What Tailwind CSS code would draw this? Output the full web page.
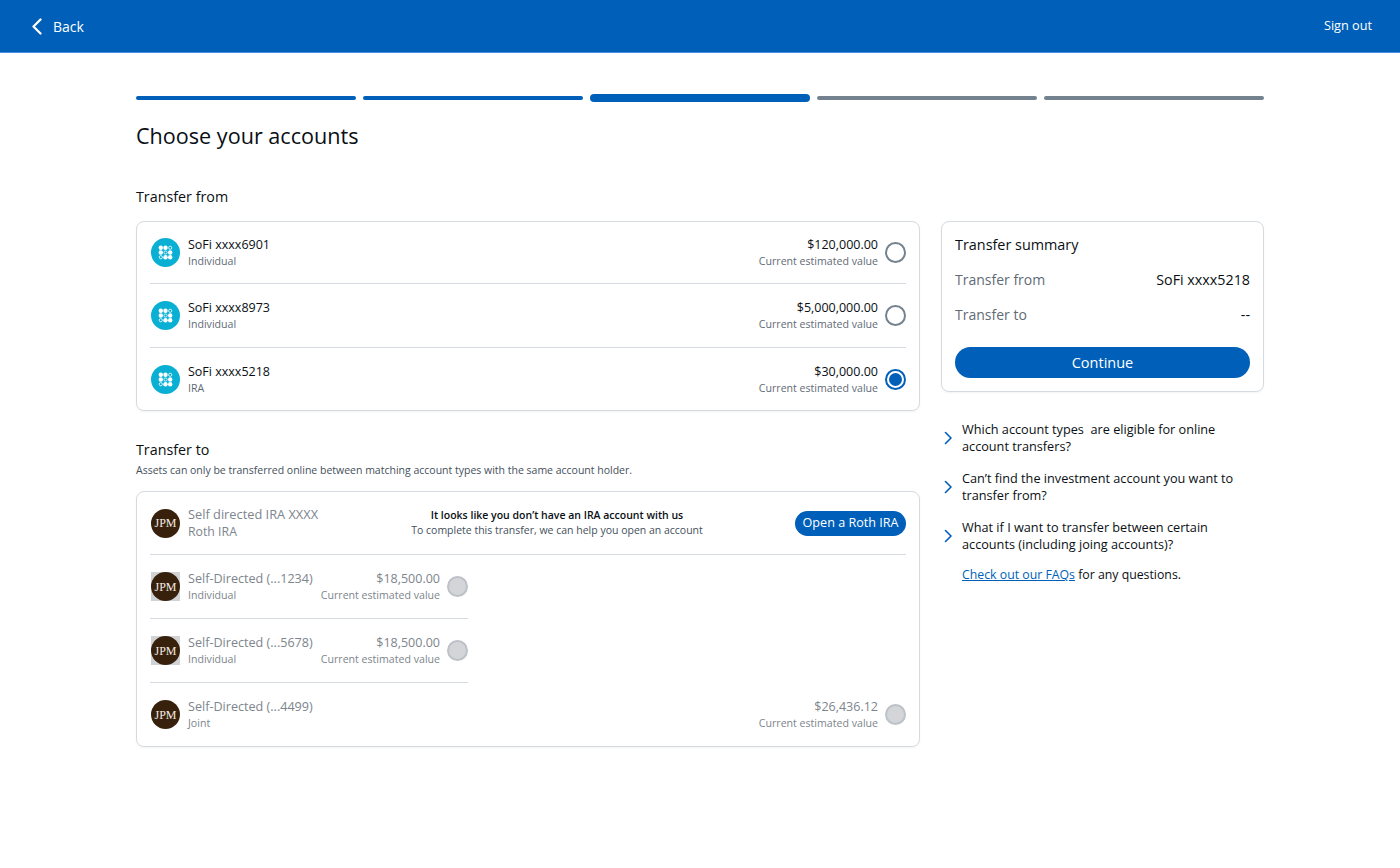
<!DOCTYPE html>
<html lang="en">
<head>
    <meta charset="UTF-8">
    <title>Choose your accounts</title>
    <script src="https://cdn.jsdelivr.net/npm/@tailwindcss/browser@4"></script>
</head>
<body class="bg-white min-h-screen font-['Open_Sans',sans-serif] text-[#0a0f14]">
    <!-- Header -->
    <div class="h-[53px] bg-[#005fb8] border-b border-[#4a8fe0] flex justify-between items-center pl-[32px] pr-[28px] text-white font-medium">
        <div class="flex items-center gap-[10px] text-[14px]">
            <svg class="w-[11px] h-[17px]" viewBox="0 0 11 17" fill="none" stroke="white" stroke-width="2.3" stroke-linecap="round" stroke-linejoin="round"><path d="M8.5 1.5 1.5 8.5l7 7" /></svg>
            <span>Back</span>
        </div>
        <span class="text-[12.7px]">Sign out</span>
    </div>

    <div class="w-[1128px] ml-[136px]">
        <!-- Steps -->
        <div class="flex items-center gap-[7px] mt-[41px] h-[8px]">
            <div class="flex-1 h-[4px] rounded-full bg-[#005fb8]"></div>
            <div class="flex-1 h-[4px] rounded-full bg-[#005fb8]"></div>
            <div class="flex-1 h-[8px] rounded-full bg-[#005fb8]"></div>
            <div class="flex-1 h-[4px] rounded-full bg-[#74828f]"></div>
            <div class="flex-1 h-[4px] rounded-full bg-[#74828f]"></div>
        </div>
        <h1 class="text-[21.6px] leading-[30px] font-medium mt-[19px]">Choose your accounts</h1>

        <div class="flex gap-[21px] mt-[34px]">
            <!-- Left column -->
            <div class="w-[784px]">
                <h2 class="text-[14.3px] leading-[24px] font-medium">Transfer from</h2>
                <div class="mt-[12px] border border-[#d5dae0] rounded-[8px] px-[13px] shadow-[0_1px_2px_rgba(0,0,0,0.05)]">
                    <div class="flex items-center h-[62px] border-b border-[#d5dae0]">
                        <svg class="w-[29px] h-[29px] ml-[1px] shrink-0" viewBox="0 0 29 29"><circle cx="14.5" cy="14.5" r="14.5" fill="#0ab0d4" /><g fill="white"><circle cx="9.8" cy="9.8" r="2.2" /><circle cx="14.5" cy="9.8" r="2.2" /><circle cx="19.2" cy="9.8" r="1.6" fill="none" stroke="white" stroke-width=".8" /><circle cx="9.8" cy="14.5" r="2.2" /><circle cx="14.5" cy="14.5" r="1.6" fill="none" stroke="white" stroke-width=".8" /><circle cx="19.2" cy="14.5" r="2.2" /><circle cx="9.8" cy="19.2" r="1.6" fill="none" stroke="white" stroke-width=".8" /><circle cx="14.5" cy="19.2" r="2.2" /><circle cx="19.2" cy="19.2" r="2.2" /></g></svg>
                        <div class="ml-[8px] whitespace-nowrap">
                            <div class="text-[12.5px] leading-[17px] font-medium">SoFi xxxx6901</div>
                            <div class="text-[10.6px] leading-[16px] text-[#5f6b76]">Individual</div>
                        </div>
                        <div class="ml-auto text-right whitespace-nowrap">
                            <div class="text-[12.5px] leading-[17px] font-medium">$120,000.00</div>
                            <div class="text-[10.6px] leading-[16px] text-[#5f6b76]">Current estimated value</div>
                        </div>
                        <div class="ml-[7px] w-[21px] h-[21px] rounded-full border-2 border-[#74828f]"></div>
                    </div>
                    <div class="flex items-center h-[64px] border-b border-[#d5dae0]">
                        <svg class="w-[29px] h-[29px] ml-[1px] shrink-0" viewBox="0 0 29 29"><circle cx="14.5" cy="14.5" r="14.5" fill="#0ab0d4" /><g fill="white"><circle cx="9.8" cy="9.8" r="2.2" /><circle cx="14.5" cy="9.8" r="2.2" /><circle cx="19.2" cy="9.8" r="1.6" fill="none" stroke="white" stroke-width=".8" /><circle cx="9.8" cy="14.5" r="2.2" /><circle cx="14.5" cy="14.5" r="1.6" fill="none" stroke="white" stroke-width=".8" /><circle cx="19.2" cy="14.5" r="2.2" /><circle cx="9.8" cy="19.2" r="1.6" fill="none" stroke="white" stroke-width=".8" /><circle cx="14.5" cy="19.2" r="2.2" /><circle cx="19.2" cy="19.2" r="2.2" /></g></svg>
                        <div class="ml-[8px] whitespace-nowrap">
                            <div class="text-[12.5px] leading-[17px] font-medium">SoFi xxxx8973</div>
                            <div class="text-[10.6px] leading-[16px] text-[#5f6b76]">Individual</div>
                        </div>
                        <div class="ml-auto text-right whitespace-nowrap">
                            <div class="text-[12.5px] leading-[17px] font-medium">$5,000,000.00</div>
                            <div class="text-[10.6px] leading-[16px] text-[#5f6b76]">Current estimated value</div>
                        </div>
                        <div class="ml-[7px] w-[21px] h-[21px] rounded-full border-2 border-[#74828f]"></div>
                    </div>
                    <div class="flex items-center h-[62px]">
                        <svg class="w-[29px] h-[29px] ml-[1px] shrink-0" viewBox="0 0 29 29"><circle cx="14.5" cy="14.5" r="14.5" fill="#0ab0d4" /><g fill="white"><circle cx="9.8" cy="9.8" r="2.2" /><circle cx="14.5" cy="9.8" r="2.2" /><circle cx="19.2" cy="9.8" r="1.6" fill="none" stroke="white" stroke-width=".8" /><circle cx="9.8" cy="14.5" r="2.2" /><circle cx="14.5" cy="14.5" r="1.6" fill="none" stroke="white" stroke-width=".8" /><circle cx="19.2" cy="14.5" r="2.2" /><circle cx="9.8" cy="19.2" r="1.6" fill="none" stroke="white" stroke-width=".8" /><circle cx="14.5" cy="19.2" r="2.2" /><circle cx="19.2" cy="19.2" r="2.2" /></g></svg>
                        <div class="ml-[8px] whitespace-nowrap">
                            <div class="text-[12.5px] leading-[17px] font-medium">SoFi xxxx5218</div>
                            <div class="text-[10.6px] leading-[16px] text-[#5f6b76]">IRA</div>
                        </div>
                        <div class="ml-auto text-right whitespace-nowrap">
                            <div class="text-[12.5px] leading-[17px] font-medium">$30,000.00</div>
                            <div class="text-[10.6px] leading-[16px] text-[#5f6b76]">Current estimated value</div>
                        </div>
                        <div class="ml-[7px] w-[21px] h-[21px] rounded-full border-2 border-[#005fb8] p-[2px]"><div class="w-full h-full rounded-full bg-[#005fb8]"></div></div>
                    </div>
                </div>

                <h2 class="text-[14.3px] leading-[24px] font-medium mt-[27px]">Transfer to</h2>
                <p class="text-[10.5px] leading-[16px] text-[#44505c]">Assets can only be transferred online between matching account types with the same account holder.</p>
                <div class="mt-[13px] border border-[#d5dae0] rounded-[8px] px-[13px] shadow-[0_1px_2px_rgba(0,0,0,0.05)]">
                    <div class="flex items-center h-[63px] border-b border-[#d5dae0]">
                        <div class="w-[29px] h-[29px] ml-[1px] shrink-0 rounded-full bg-[#38210c] text-[#f3ece2] text-[12px] font-['Liberation_Serif',serif] flex items-center justify-center">JPM</div>
                        <div class="ml-[8px] w-[215px] text-[#7d858d] whitespace-nowrap">
                            <div class="text-[12.8px] leading-[18px] font-medium">Self directed IRA XXXX</div>
                            <div class="text-[12.3px] leading-[18px]">Roth IRA</div>
                        </div>
                        <div class="w-[306px] text-center text-[10.5px] leading-[15px] ml-[1px] whitespace-nowrap">
                            <div class="font-semibold">It looks like you don’t have an IRA account with us</div>
                            <div class="text-[#44505c]">To complete this transfer, we can help you open an account</div>
                        </div>
                        <div class="ml-auto h-[25px] px-[7.5px] rounded-full bg-[#005fb8] text-white text-[12.6px] font-medium flex items-center whitespace-nowrap">Open a Roth IRA</div>
                    </div>
                    <div class="w-[318px] flex items-center h-[64px] border-b border-[#d5dae0]">
                        <div class="w-[29px] h-[29px] ml-[1px] shrink-0 bg-[#d0d2d4]"><div class="w-full h-full rounded-full bg-[#38210c] text-[#f3ece2] text-[12px] font-['Liberation_Serif',serif] flex items-center justify-center">JPM</div></div>
                        <div class="ml-[8px] text-[#7d858d] whitespace-nowrap">
                            <div class="text-[12.6px] leading-[17px] font-medium">Self-Directed (...1234)</div>
                            <div class="text-[10.6px] leading-[16px]">Individual</div>
                        </div>
                        <div class="ml-auto text-right text-[#7d858d] whitespace-nowrap">
                            <div class="text-[12.5px] leading-[17px] font-medium">$18,500.00</div>
                            <div class="text-[10.6px] leading-[16px]">Current estimated value</div>
                        </div>
                        <div class="ml-[7px] w-[21px] h-[21px] rounded-full border-2 border-[#bcc2c8] bg-[#d3d5d8]"></div>
                    </div>
                    <div class="w-[318px] flex items-center h-[64px] border-b border-[#d5dae0]">
                        <div class="w-[29px] h-[29px] ml-[1px] shrink-0 bg-[#d0d2d4]"><div class="w-full h-full rounded-full bg-[#38210c] text-[#f3ece2] text-[12px] font-['Liberation_Serif',serif] flex items-center justify-center">JPM</div></div>
                        <div class="ml-[8px] text-[#7d858d] whitespace-nowrap">
                            <div class="text-[12.6px] leading-[17px] font-medium">Self-Directed (...5678)</div>
                            <div class="text-[10.6px] leading-[16px]">Individual</div>
                        </div>
                        <div class="ml-auto text-right text-[#7d858d] whitespace-nowrap">
                            <div class="text-[12.5px] leading-[17px] font-medium">$18,500.00</div>
                            <div class="text-[10.6px] leading-[16px]">Current estimated value</div>
                        </div>
                        <div class="ml-[7px] w-[21px] h-[21px] rounded-full border-2 border-[#bcc2c8] bg-[#d3d5d8]"></div>
                    </div>
                    <div class="flex items-center h-[63px]">
                        <div class="w-[29px] h-[29px] ml-[1px] shrink-0 rounded-full bg-[#38210c] text-[#f3ece2] text-[12px] font-['Liberation_Serif',serif] flex items-center justify-center">JPM</div>
                        <div class="ml-[8px] text-[#7d858d] whitespace-nowrap">
                            <div class="text-[12.6px] leading-[17px] font-medium">Self-Directed (...4499)</div>
                            <div class="text-[10.6px] leading-[16px]">Joint</div>
                        </div>
                        <div class="ml-auto text-right text-[#7d858d] whitespace-nowrap">
                            <div class="text-[12.5px] leading-[17px] font-medium">$26,436.12</div>
                            <div class="text-[10.6px] leading-[16px]">Current estimated value</div>
                        </div>
                        <div class="ml-[7px] w-[21px] h-[21px] rounded-full border-2 border-[#bcc2c8] bg-[#d3d5d8]"></div>
                    </div>
                </div>
            </div>

            <!-- Right column -->
            <div class="w-[323px] pt-[36px]">
                <div class="h-[171px] border border-[#d5dae0] rounded-[8px] px-[13px] pt-[11px] shadow-[0_1px_2px_rgba(0,0,0,0.05)]">
                    <div class="text-[14.4px] leading-[24px] font-medium">Transfer summary</div>
                    <div class="flex justify-between items-center mt-[11px] text-[14px] leading-[24px]">
                        <span class="text-[#5f6b76]">Transfer from</span>
                        <span class="font-medium text-[14.3px]">SoFi xxxx5218</span>
                    </div>
                    <div class="flex justify-between items-center mt-[11px] text-[14px] leading-[24px]">
                        <span class="text-[#5f6b76]">Transfer to</span>
                        <span class="font-medium text-[14.3px]">--</span>
                    </div>
                    <div class="h-[31px] mt-[20px] rounded-full bg-[#005fb8] text-white text-[14.5px] font-medium flex items-center justify-center">Continue</div>
                </div>

                <div class="mt-[29px] flex items-center">
                    <svg class="w-[8px] h-[14px] ml-[3px] shrink-0" viewBox="0 0 8 14" fill="none" stroke="#005fb8" stroke-width="1.6" stroke-linecap="round" stroke-linejoin="round"><path d="m1.5 1.5 5.5 5.5-5.5 5.5" /></svg>
                    <div class="ml-[10px] text-[12.7px] leading-[17px] font-medium">Which account types&nbsp; are eligible for online<br>account transfers?</div>
                </div>
                <div class="mt-[15px] flex items-center">
                    <svg class="w-[8px] h-[14px] ml-[3px] shrink-0" viewBox="0 0 8 14" fill="none" stroke="#005fb8" stroke-width="1.6" stroke-linecap="round" stroke-linejoin="round"><path d="m1.5 1.5 5.5 5.5-5.5 5.5" /></svg>
                    <div class="ml-[10px] text-[12.7px] leading-[17px] font-medium">Can’t find the investment account you want to<br>transfer from?</div>
                </div>
                <div class="mt-[15px] flex items-center">
                    <svg class="w-[8px] h-[14px] ml-[3px] shrink-0" viewBox="0 0 8 14" fill="none" stroke="#005fb8" stroke-width="1.6" stroke-linecap="round" stroke-linejoin="round"><path d="m1.5 1.5 5.5 5.5-5.5 5.5" /></svg>
                    <div class="ml-[10px] text-[12.7px] leading-[17px] font-medium">What if I want to transfer between certain<br>accounts (including joing accounts)?</div>
                </div>
                <p class="ml-[21px] mt-[13px] text-[12.3px] leading-[18px]"><a class="underline text-[#005fb8]">Check out our FAQs</a> for any questions.</p>
            </div>
        </div>
    </div>
</body>
</html>
